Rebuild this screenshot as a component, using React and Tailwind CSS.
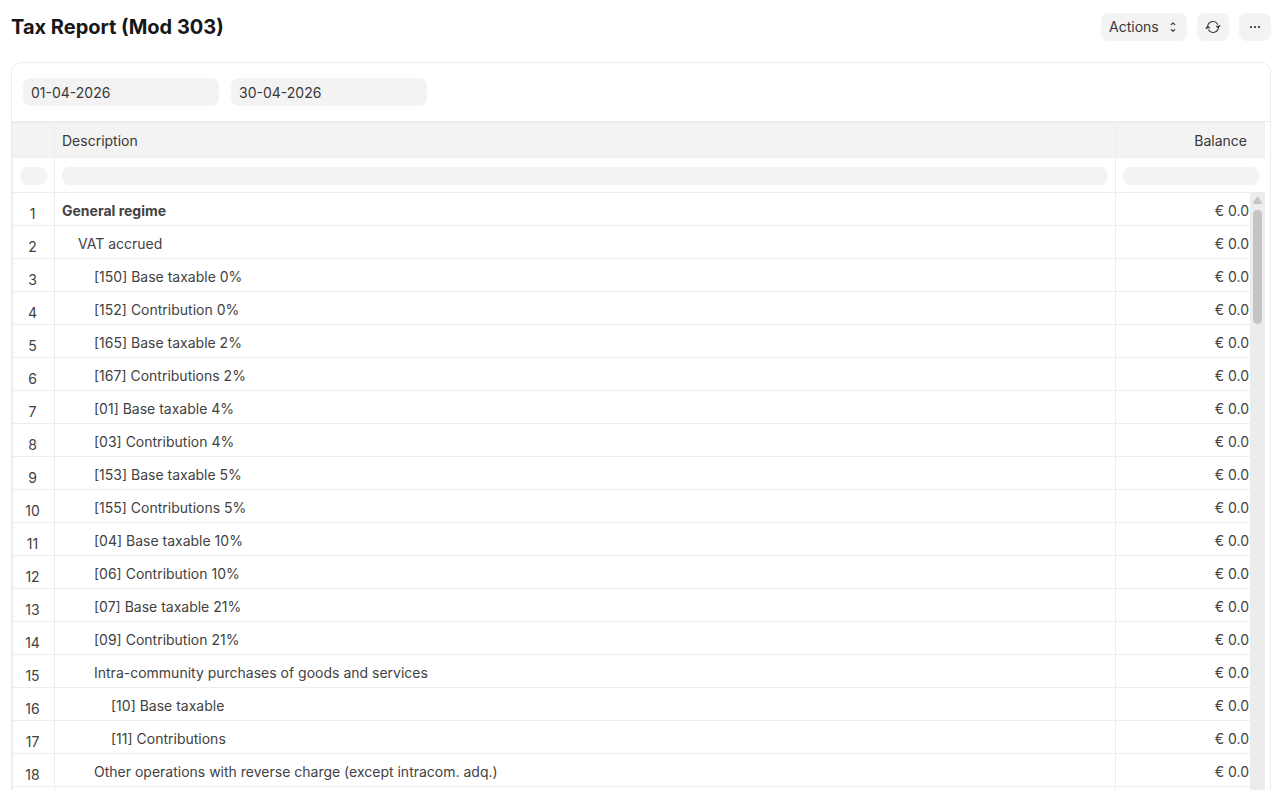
const rows = [
  { label: "General regime", indent: 0, bold: true },
  { label: "VAT accrued", indent: 1 },
  { label: "[150] Base taxable 0%", indent: 2 },
  { label: "[152] Contribution 0%", indent: 2 },
  { label: "[165] Base taxable 2%", indent: 2 },
  { label: "[167] Contributions 2%", indent: 2 },
  { label: "[01] Base taxable 4%", indent: 2 },
  { label: "[03] Contribution 4%", indent: 2 },
  { label: "[153] Base taxable 5%", indent: 2 },
  { label: "[155] Contributions 5%", indent: 2 },
  { label: "[04] Base taxable 10%", indent: 2 },
  { label: "[06] Contribution 10%", indent: 2 },
  { label: "[07] Base taxable 21%", indent: 2 },
  { label: "[09] Contribution 21%", indent: 2 },
  { label: "Intra-community purchases of goods and services", indent: 2 },
  { label: "[10] Base taxable", indent: 3 },
  { label: "[11] Contributions", indent: 3 },
  { label: "Other operations with reverse charge (except intracom. adq.)", indent: 2 },
];

const indents = ["pl-[7px]", "pl-[23px]", "pl-[39px]", "pl-[56px]"];

function SelectIcon() {
  return (
    <svg width="8" height="14" viewBox="0 0 8 14" fill="none" stroke="#383838" strokeWidth="1.2" strokeLinecap="round" strokeLinejoin="round">
      <path d="M2.2 4.6 4 3 5.8 4.6M2.2 9.6 4 11.2 5.8 9.6" />
    </svg>
  );
}

function RefreshIcon() {
  return (
    <svg width="16" height="16" viewBox="0 0 16 16" fill="none" stroke="#383838" strokeWidth="1.1" strokeLinecap="round" strokeLinejoin="round">
      <path d="M2.6 9V8A5.4 5.4 0 0 1 12.6 5.2M13.4 7V8A5.4 5.4 0 0 1 3.4 10.8" />
      <path d="M1.2 9.4 2.6 7.6 4.5 8.8M14.8 6.6 13.4 8.4 11.5 7.2" strokeWidth="1.3" />
    </svg>
  );
}

function DotsIcon() {
  return (
    <svg width="12" height="4" viewBox="0 0 12 4" fill="#383838">
      <rect x="1" y="1" width="2" height="2" rx="0.4" />
      <rect x="5" y="1" width="2" height="2" rx="0.4" />
      <rect x="9" y="1" width="2" height="2" rx="0.4" />
    </svg>
  );
}

function PageHead() {
  return (
    <header className="flex shrink-0 items-center justify-between pt-[13px]">
      <h1 className="text-xl/7 font-bold text-[#171717]">Tax Report (Mod 303)</h1>
      <div className="flex items-center gap-[10px]">
        <button type="button" className="flex h-7 w-[86px] items-center justify-between rounded-lg bg-[#f3f3f3] pr-[10px] pl-2">
          Actions
          <SelectIcon />
        </button>
        <button type="button" aria-label="Refresh" className="flex h-7 w-8 items-center justify-center rounded-lg bg-[#f3f3f3]">
          <RefreshIcon />
        </button>
        <button type="button" aria-label="Menu" className="flex h-7 w-8 items-center justify-center rounded-lg bg-[#f3f3f3]">
          <DotsIcon />
        </button>
      </div>
    </header>
  );
}

function Filters() {
  const field = "h-7 w-[196px] rounded-lg bg-[#f3f3f3] px-2 outline-none";
  return (
    <div className="flex gap-3 border-b border-[#ededed] px-[11px] py-[15px]">
      <input type="text" aria-label="From Date" defaultValue="01-04-2026" className={field} />
      <input type="text" aria-label="To Date" defaultValue="30-04-2026" className={field} />
    </div>
  );
}

function ColumnFilter({ label }) {
  return (
    <input type="text" aria-label={label} className="block h-[18px] w-full rounded-lg bg-[#f3f3f3] px-2 outline-none" />
  );
}

function Scrollbar() {
  return (
    <div className="absolute top-[71px] right-0 bottom-0 flex w-[15px] flex-col items-center bg-[#ececec]">
      <svg width="9" height="17" viewBox="0 0 9 17" fill="#c4c4c4">
        <path d="M4.5 4Q5.2 4 5.7 4.8L8.6 9.3Q9.3 11 8 11H1Q-.3 11 .4 9.3L3.3 4.8Q3.8 4 4.5 4Z" />
      </svg>
      <div className="h-[114px] w-[9px] rounded-full bg-[#c4c4c4]" />
    </div>
  );
}

function ReportTable() {
  return (
    <div className="relative mr-[5px]">
      <table className="w-full table-fixed border-separate border-spacing-0 border-t border-[#ededed]">
        <colgroup>
          <col className="w-[43px]" />
          <col />
          <col className="w-[149px]" />
        </colgroup>
        <thead>
          <tr className="h-[35px] bg-[#f3f3f3] *:border-b *:border-[#ededed] *:font-normal">
            <th className="border-x" aria-label="Row" />
            <th className="border-r px-[7px] pt-0.5 text-left">Description</th>
            <th className="pt-0.5 pr-[18px] text-right">Balance</th>
          </tr>
          <tr className="h-[35px] *:border-b *:border-[#ededed] *:pt-0.5 *:pl-[7px]">
            <td className="border-x pr-[7px]"><ColumnFilter label="Filter rows" /></td>
            <td className="border-r pr-[7px]"><ColumnFilter label="Filter description" /></td>
            <td className="pr-1.5"><ColumnFilter label="Filter balance" /></td>
          </tr>
        </thead>
        <tbody className="text-[#424242]">
          {rows.map((row, i) => (
            <tr key={row.label} className="h-[33px] *:border-b *:border-[#ededed]">
              <td className="border-x pt-2.5 pr-0.5 text-center">{i + 1}</td>
              <td className={`truncate border-r pt-1 ${indents[row.indent]} ${row.bold ? "font-bold" : ""}`}>
                {row.label}
              </td>
              <td className="pt-1 pr-4 text-right">€ 0.0</td>
            </tr>
          ))}
          <tr className="h-[33px] *:border-[#ededed]" aria-hidden="true">
            <td className="border-x" />
            <td className="border-r" />
            <td />
          </tr>
        </tbody>
      </table>
      <Scrollbar />
    </div>
  );
}

export default function App() {
  return (
    <div className="flex h-screen flex-col overflow-hidden bg-white px-[11px] font-['Inter',sans-serif] text-sm/5 text-[#383838]">
      <PageHead />
      <main className="mt-[21px] shrink-0 rounded-t-[10px] border border-b-0 border-[#ededed]">
        <Filters />
        <ReportTable />
      </main>
    </div>
  );
}
